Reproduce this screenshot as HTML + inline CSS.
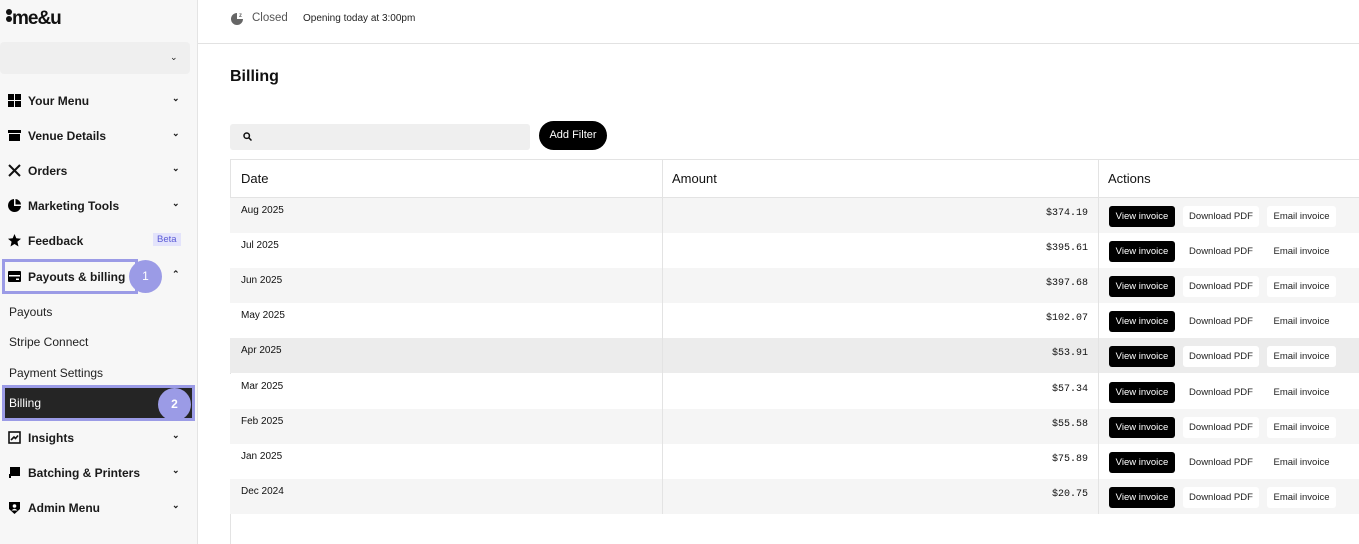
<!DOCTYPE html>
<html style="overflow:hidden"><head><meta charset="utf-8"><style>
*{box-sizing:border-box;margin:0;padding:0}
html,body{width:1359px;height:544px;overflow:hidden}
body{font-family:"Liberation Sans",sans-serif;background:#fff;color:#111;position:relative}
.sb{position:absolute;left:0;top:0;width:198px;height:544px;background:#f7f7f7;border-right:1px solid #e4e4e4}
.logo{position:absolute;left:6px;top:8px;font-weight:bold;font-size:19px;letter-spacing:-1px}
.sel{position:absolute;left:0;top:42px;width:190px;height:32px;background:#efefef;border-radius:4px}
.chev{position:absolute;font-size:9px;color:#222}
.it{position:absolute;left:0;width:190px;height:20px;font-size:12px;font-weight:bold;color:#1a1a1a}
.it .ic{position:absolute;left:8px;top:3px;width:13px;height:13px}
.it .t{position:absolute;left:28px;top:3px}
.it .c{position:absolute;left:172px;top:2px;font-size:9px}
.sub{position:absolute;left:9px;font-size:12px;color:#222}
.main{position:absolute;left:198px;top:0;right:0}
.top{height:44px;border-bottom:1px solid #e2e2e2;position:relative}
.row{position:absolute;left:230px;width:1129px;height:35px;font-size:10px}
.row .d{position:absolute;left:11px;top:7px}
.row .a{position:absolute;left:432px;width:426px;top:10px;text-align:right;font-family:"Liberation Mono",monospace;font-size:10px}
.btn{position:absolute;top:8px;height:21px;border-radius:3px;font-size:9.5px;line-height:21px;text-align:center;background:#fff;color:#222}
.v{left:879px;width:66px;background:#000;color:#fff}
.p{left:953px;width:76px}
.e{left:1037px;width:69px}
.vl{position:absolute;top:160px;height:354px;width:1px;background:#e3e3e3}
</style></head><body>
<div class="sb">
 <div class="logo"><span style="display:inline-block;width:6px;vertical-align:2px"><span style="display:block;width:6px;height:6px;border-radius:50%;background:#111;margin-bottom:1px"></span><span style="display:block;width:6px;height:6px;border-radius:50%;background:#111"></span></span>me&amp;u</div>
 <div class="sel"><span class="chev" style="left:170px;top:10px">&#8964;</span></div>
 <div class="it" style="top:91px"><svg class="ic" viewBox="0 0 13 13"><rect x="0" y="0" width="6" height="6"/><rect x="7" y="0" width="6" height="6"/><rect x="0" y="7" width="6" height="6"/><rect x="7" y="7" width="6" height="6"/></svg><span class="t">Your Menu</span><span class="c">&#8964;</span></div>
 <div class="it" style="top:126px"><svg class="ic" viewBox="0 0 13 13"><rect x="0" y="1" width="13" height="3"/><rect x="1" y="5" width="11" height="7"/></svg><span class="t">Venue Details</span><span class="c">&#8964;</span></div>
 <div class="it" style="top:161px"><svg class="ic" viewBox="0 0 13 13" stroke="#111" stroke-width="2"><path d="M1 1L12 12M12 1L1 12"/></svg><span class="t">Orders</span><span class="c">&#8964;</span></div>
 <div class="it" style="top:196px"><svg class="ic" viewBox="0 0 13 13"><path d="M6 0A6.5 6.5 0 1 0 13 7H6Z"/><path d="M7.5 0V5.5H13A6 6 0 0 0 7.5 0Z"/></svg><span class="t">Marketing Tools</span><span class="c">&#8964;</span></div>
 <div class="it" style="top:231px"><svg class="ic" viewBox="0 0 13 13"><path d="M6.5 0L8.3 4.3L13 4.7L9.4 7.8L10.5 12.5L6.5 10L2.5 12.5L3.6 7.8L0 4.7L4.7 4.3Z"/></svg><span class="t">Feedback</span><span style="position:absolute;left:153px;top:2px;background:#e3e3fb;color:#5b5bd6;font-size:9.5px;padding:1px 4px;font-weight:normal">Beta</span></div>
 <div style="position:absolute;left:2px;top:259px;width:136px;height:35px;border:3px solid #9b9be6"></div>
 <div class="it" style="top:267px"><svg class="ic" viewBox="0 0 13 13"><rect x="0" y="1" width="13" height="11" rx="1"/><rect x="1" y="5" width="11" height="1.5" fill="#fff"/><rect x="8" y="8.5" width="3" height="1.5" fill="#fff"/></svg><span class="t">Payouts &amp; billing</span><span class="c">&#8963;</span></div>
 <div style="position:absolute;left:129px;top:260px;width:33px;height:33px;border-radius:50%;background:#9b9be6;color:#fff;font-size:12px;text-align:center;line-height:33px">1</div>
 <div class="sub" style="top:305px">Payouts</div>
 <div class="sub" style="top:335px">Stripe Connect</div>
 <div class="sub" style="top:366px">Payment Settings</div>
 <div style="position:absolute;left:2px;top:385px;width:193px;height:36px;border:3px solid #9b9be6;background:#252525"></div>
 <div class="sub" style="top:396px;color:#fff">Billing</div>
 <div style="position:absolute;left:158px;top:388px;width:33px;height:33px;border-radius:50%;background:#9b9be6;color:#fff;font-size:12px;text-align:center;line-height:33px;font-weight:bold">2</div>
 <div class="it" style="top:428px"><svg class="ic" viewBox="0 0 13 13" fill="none" stroke="#111" stroke-width="1.6"><rect x="1" y="1" width="11" height="11"/><path d="M3 9L6 6L7.5 7.5L10 4.5"/></svg><span class="t">Insights</span><span class="c">&#8964;</span></div>
 <div class="it" style="top:463px"><svg class="ic" viewBox="0 0 13 13"><path d="M2 1H12V10H3V12H1V8H2Z"/></svg><span class="t">Batching &amp; Printers</span><span class="c">&#8964;</span></div>
 <div class="it" style="top:498px"><svg class="ic" viewBox="0 0 13 13"><path d="M1 1H12V8L6.5 13L1 8Z"/><circle cx="6.5" cy="5" r="1.8" fill="#fff"/><path d="M3.5 9.5Q6.5 6 9.5 9.5" fill="#fff"/></svg><span class="t">Admin Menu</span><span class="c">&#8964;</span></div>
</div>
<div class="main"><div class="top">
 <svg style="position:absolute;left:33px;top:11px" width="14" height="14" viewBox="0 0 14 14"><path d="M6 2A6 6 0 1 0 12 8H6Z" fill="#666"/><text x="8" y="6" font-size="6" font-family="Liberation Sans" fill="#666" font-weight="bold">z</text></svg>
 <span style="position:absolute;left:54px;top:12px;font-size:11.5px;color:#555">Closed</span>
 <span style="position:absolute;left:105px;top:13px;font-size:10px;color:#222">Opening today at 3:00pm</span>
</div></div>
<div style="position:absolute;left:230px;top:68px;font-size:16px;font-weight:bold">Billing</div>
<div style="position:absolute;left:230px;top:124px;width:300px;height:26px;background:#efefef;border-radius:3px"><svg style="position:absolute;left:13px;top:8px" width="9" height="9" viewBox="0 0 9 9" fill="none" stroke="#111" stroke-width="1.5"><circle cx="3.7" cy="3.7" r="2.7"/><path d="M5.7 5.7L8.5 8.5"/></svg></div>
<div style="position:absolute;left:539px;top:121px;width:68px;height:29px;border-radius:15px;background:#000;color:#fff;font-size:11px;line-height:29px;text-align:center">Add Filter</div>
<div style="position:absolute;left:230px;top:159px;width:1129px;height:385px;border-left:1px solid #e3e3e3;border-top:1px solid #e3e3e3"></div>
<div style="position:absolute;left:230px;top:197px;width:1129px;height:1px;background:#e3e3e3"></div>
<div style="position:absolute;left:241px;top:171px;font-size:13px">Date</div>
<div style="position:absolute;left:672px;top:171px;font-size:13px">Amount</div>
<div style="position:absolute;left:1108px;top:171px;font-size:13px">Actions</div>
<div class="row" style="top:198px;background:#f5f5f5"><span class="d">Aug 2025</span><span class="a">$374.19</span><span class="btn v">View invoice</span><span class="btn p">Download PDF</span><span class="btn e">Email invoice</span></div>
<div class="row" style="top:233px;background:#fff"><span class="d">Jul 2025</span><span class="a">$395.61</span><span class="btn v">View invoice</span><span class="btn p">Download PDF</span><span class="btn e">Email invoice</span></div>
<div class="row" style="top:268px;background:#f5f5f5"><span class="d">Jun 2025</span><span class="a">$397.68</span><span class="btn v">View invoice</span><span class="btn p">Download PDF</span><span class="btn e">Email invoice</span></div>
<div class="row" style="top:303px;background:#fff"><span class="d">May 2025</span><span class="a">$102.07</span><span class="btn v">View invoice</span><span class="btn p">Download PDF</span><span class="btn e">Email invoice</span></div>
<div class="row" style="top:338px;background:#ececec"><span class="d">Apr 2025</span><span class="a">$53.91</span><span class="btn v">View invoice</span><span class="btn p">Download PDF</span><span class="btn e">Email invoice</span></div>
<div class="row" style="top:374px;background:#fff"><span class="d">Mar 2025</span><span class="a">$57.34</span><span class="btn v">View invoice</span><span class="btn p">Download PDF</span><span class="btn e">Email invoice</span></div>
<div class="row" style="top:409px;background:#f5f5f5"><span class="d">Feb 2025</span><span class="a">$55.58</span><span class="btn v">View invoice</span><span class="btn p">Download PDF</span><span class="btn e">Email invoice</span></div>
<div class="row" style="top:444px;background:#fff"><span class="d">Jan 2025</span><span class="a">$75.89</span><span class="btn v">View invoice</span><span class="btn p">Download PDF</span><span class="btn e">Email invoice</span></div>
<div class="row" style="top:479px;background:#f5f5f5"><span class="d">Dec 2024</span><span class="a">$20.75</span><span class="btn v">View invoice</span><span class="btn p">Download PDF</span><span class="btn e">Email invoice</span></div>
<div class="vl" style="left:662px;z-index:2"></div><div class="vl" style="left:1098px;z-index:2"></div>
</body></html>
